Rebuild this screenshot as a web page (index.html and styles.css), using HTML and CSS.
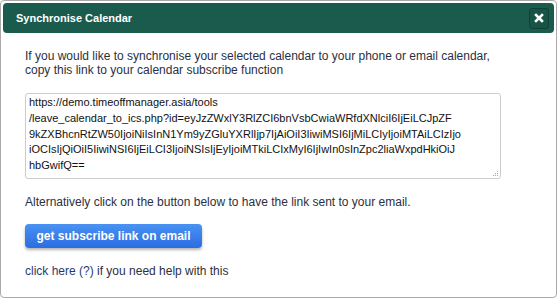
FILE: index.html
```html
<!DOCTYPE html>
<html lang="en">
<head>
    <meta charset="UTF-8">
    <title>Synchronise Calendar</title>
    <link rel="stylesheet" href="styles.css">
</head>
<body>

    <!-- Dialog -->
    <div class="dialog">
        <div class="titlebar">
            <span class="title">Synchronise Calendar</span>
            <button class="close" title="Close">
                <svg width="10" height="10" viewBox="0 0 10 10">
                    <path d="M2 2 L8 8 M8 2 L2 8" stroke="#fff" stroke-width="2.6" stroke-linecap="square"/>
                </svg>
            </button>
        </div>

        <div class="content">
            <p class="intro">If you would like to synchronise your selected calendar to your phone or email calendar, copy this link to your calendar subscribe function</p>

            <textarea class="link-box">https://demo.timeoffmanager.asia/tools
/leave_calendar_to_ics.php?id=eyJzZWxlY3RlZCI6bnVsbCwiaWRfdXNlciI6IjEiLCJpZF
9kZXBhcnRtZW50IjoiNiIsInN1Ym9yZGluYXRlIjp7IjAiOiI3IiwiMSI6IjMiLCIyIjoiMTAiLCIzIjo
iOCIsIjQiOiI5IiwiNSI6IjEiLCI3IjoiNSIsIjEyIjoiMTkiLCIxMyI6IjIwIn0sInZpc2liaWxpdHkiOiJ
hbGwifQ==</textarea>

            <p class="alt">Alternatively click on the button below to have the link sent to your email.</p>

            <button class="email-btn">get subscribe link on email</button>

            <p class="help"><a href="#">click here (?)</a> if you need help with this</p>
        </div>
    </div>

</body>
</html>
```

FILE: styles.css
```css
* {
    margin: 0;
    padding: 0;
    box-sizing: border-box;
    font-family: "Liberation Sans", Arial, sans-serif;
}
body {
    background-color: #fff;
}
.dialog {
    width: 557px;
    height: 298px;
    border: 1px solid #aaa;
    border-radius: 4px;
    padding: 2px;
    background: #fff;
}
.titlebar {
    height: 30px;
    display: flex;
    justify-content: space-between;
    align-items: center;
    background-color: #1a5b4e;
    border-radius: 4px;
    padding: 0 5px 0 13px;
}
.title {
    color: #fff;
    font-size: 11px;
    font-weight: bold;
}
.close {
    width: 20px;
    height: 21px;
    display: flex;
    align-items: center;
    justify-content: center;
    background-color: #175446;
    border: 1px solid #0f4136;
    border-radius: 3px;
    cursor: pointer;
}
.content {
    padding: 16px 0 0 22px;
    color: #2b2f3f;
    font-size: 12px;
    line-height: 14px;
}
.intro {
    width: 480px;
}
.link-box {
    display: block;
    width: 476px;
    height: 86px;
    margin-top: 16px;
    padding: 1px 3px;
    border: 1px solid #ccc;
    border-radius: 3px;
    font-size: 11px;
    line-height: 15.75px;
    color: #111;
    word-break: break-all;
    resize: vertical;
    overflow: hidden;
}
.link-box::-webkit-resizer {
    background: url("data:image/svg+xml,%3Csvg xmlns='http://www.w3.org/2000/svg' width='15' height='15'%3E%3Cg fill='%23aaa'%3E%3Crect x='12' y='8' width='1' height='1'/%3E%3Crect x='10' y='10' width='1' height='1'/%3E%3Crect x='12' y='10' width='1' height='1'/%3E%3Crect x='8' y='12' width='1' height='1'/%3E%3Crect x='10' y='12' width='1' height='1'/%3E%3Crect x='12' y='12' width='1' height='1'/%3E%3C/g%3E%3C/svg%3E") no-repeat;
}
.alt {
    margin-top: 16px;
}
.email-btn {
    display: block;
    width: 177px;
    height: 24px;
    margin-top: 15px;
    border: none;
    border-radius: 4px;
    background: linear-gradient(#4a92f2, #2a6de2);
    box-shadow: 0 2px 3px rgba(0, 0, 0, 0.3);
    color: #fff;
    font-size: 12px;
    font-weight: bold;
    cursor: pointer;
}
.help {
    margin-top: 16px;
}
.help a {
    color: #1f3a73;
    text-decoration: none;
}
```
